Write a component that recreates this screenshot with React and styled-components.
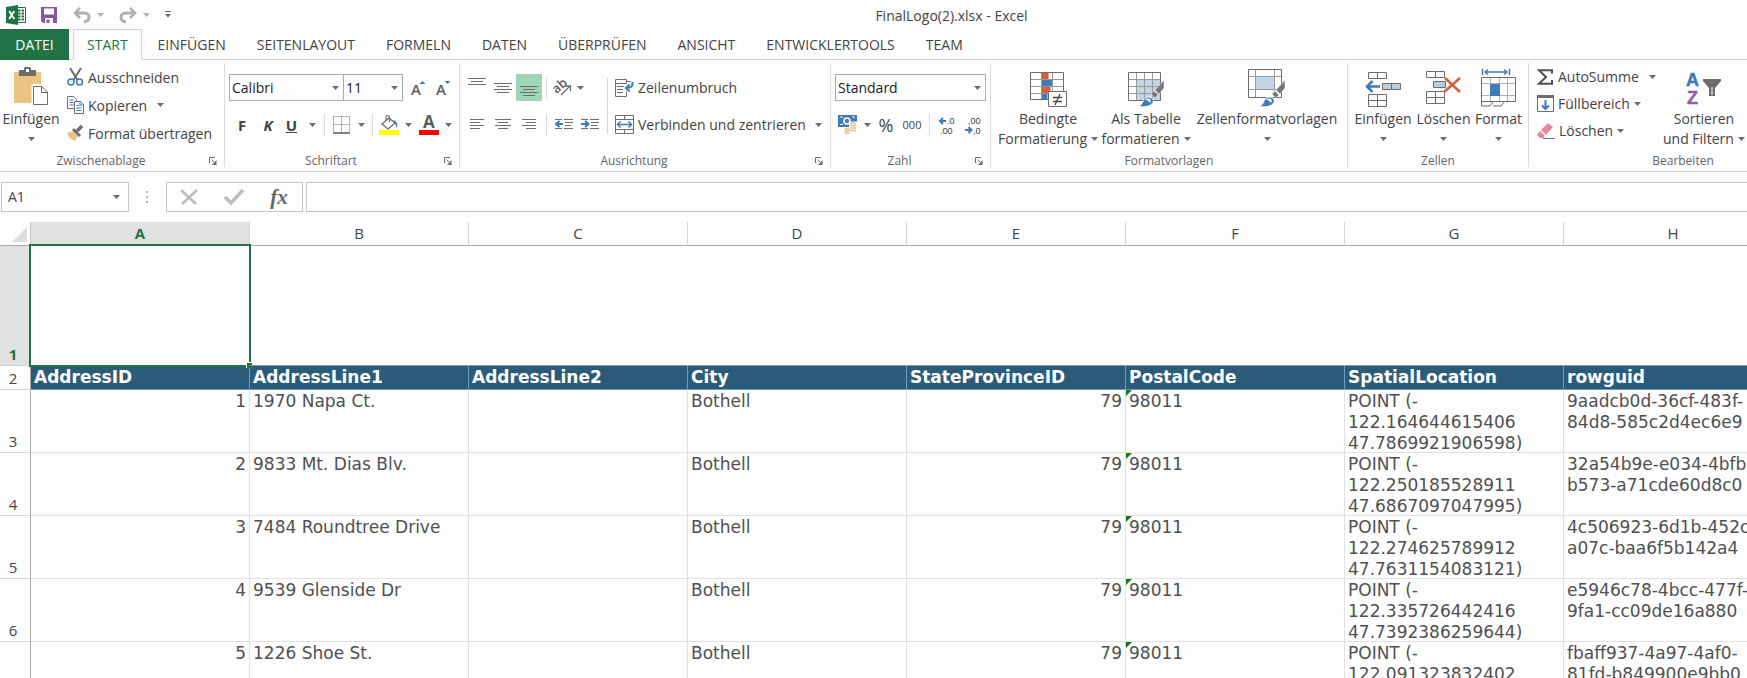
import React, { useState } from "react";
import styled, { createGlobalStyle, css } from "styled-components";

const GlobalStyle = createGlobalStyle`
	* {
		box-sizing: border-box;
	}
	body {
		margin: 0;
		overflow: hidden;
		background: #fdfdfd;
		color: #444;
		font-family: "Open Sans", "Noto Sans", sans-serif;
		font-size: 14px;
	}
	button, input, select {
		font: inherit;
		color: inherit;
	}
	svg {
		display: block;
		flex: none;
		overflow: visible;
	}
`

const Page = styled.div`
	min-height: 100vh;
	overflow: hidden;
`

const plainButton = css`
	border: 0;
	padding: 0;
	margin: 0;
	background: none;
	cursor: pointer;
	white-space: nowrap;
`

/* ---------- title bar and tabs ---------- */

const TitleBar = styled.header`
	display: grid;
	grid-template-columns: 1fr auto 1fr;
	align-items: center;
	height: 29px;
	padding: 0 6px 3px 0;
`

const QuickAccess = styled.div`
	display: flex;
	align-items: center;
	padding: 0 6px;
`

const QuickButton = styled.button`
	${plainButton}
	display: flex;
	align-items: center;
	gap: 6px;
	margin-right: ${p => p.$gap || 15}px;
`

const Title = styled.h1`
	margin: 0;
	padding: 3px 0 0 162px;
	font-size: 14px;
	font-weight: 400;
	line-height: 26px;
`

const Tabs = styled.nav`
	display: flex;
	gap: 1px;
	height: 31px;
	border-bottom: 1px solid #d2d2d2;
`

const FileTab = styled.button`
	${plainButton}
	width: 69px;
	height: 31px;
	margin-right: 3px;
	background: #217346;
	color: #fff;
`

const Tab = styled.button`
	${plainButton}
	height: 31px;
	padding: 0 14px;
	border: 1px solid transparent;
	${p => p.$active && css`
		padding: 0 13px;
		border-color: #d2d2d2;
		border-bottom-color: #fdfdfd;
		background: #fdfdfd;
		color: #217346;
	`}
`

/* ---------- ribbon ---------- */

const Ribbon = styled.div`
	display: flex;
	height: 112px;
	padding-top: 3px;
	border-bottom: 1px solid #d2d2d2;
`

const Group = styled.section`
	flex: 0 0 ${p => p.$w}px;
	display: flex;
	flex-direction: column;
	height: 104px;
	border-right: 1px solid #dcdcdc;
`

const GroupBody = styled.div`
	flex: 1;
	display: flex;
	align-items: flex-start;
	padding: 0 ${p => p.$pad || 0}px;
`

const GroupFooter = styled.div`
	display: flex;
	align-items: center;
	height: 12px;
	font-size: 12px;
	line-height: 12px;
	color: #666;
`

const GroupName = styled.span`
	flex: 1;
	text-align: center;
`

const Launcher = styled.button`
	${plainButton}
	display: flex;
	justify-content: center;
	width: 22px;
`

const Stack = styled.div`
	display: flex;
	flex-direction: column;
	gap: ${p => p.$gap || 0}px;
	padding-top: ${p => p.$top || 0}px;
	padding-left: ${p => p.$left || 0}px;
`

const Line = styled.div`
	display: flex;
	align-items: center;
	height: 27px;
`

const BigButton = styled.button`
	${plainButton}
	display: flex;
	flex-direction: column;
	align-items: center;
	width: ${p => p.$w}px;
	padding-top: 4px;
	line-height: 20px;
	flex: none;
`

const BigIcon = styled.span`
	display: flex;
	align-items: flex-end;
	justify-content: center;
	height: 40px;
	margin-bottom: 2px;
`

const BigText = styled.span`
	display: flex;
	align-items: center;
	justify-content: center;
	gap: 4px;
	min-height: 20px;
`

const SmallButton = styled.button`
	${plainButton}
	display: flex;
	align-items: center;
	height: ${p => p.$h || 28}px;
	gap: 4px;
`

const SmallText = styled.span`
	padding-right: ${p => p.$gap || 0}px;
`

const Tool = styled.button`
	${plainButton}
	display: flex;
	align-items: center;
	justify-content: center;
	width: ${p => p.$w || 26}px;
	height: 27px;
	gap: ${p => p.$gap || 7}px;
	background: ${p => p.$active ? "#9fd5b7" : "none"};
	font-size: ${p => p.$size || 14}px;
	flex: none;
`

const Separator = styled.span`
	width: 1px;
	height: ${p => p.$h || 22}px;
	margin: 0 ${p => p.$m || 0}px;
	background: #dcdcdc;
	flex: none;
`

const SelectBox = styled.label`
	display: grid;
	align-items: center;
	width: ${p => p.$w}px;
	height: 27px;
	border: 1px solid #ababab;
	margin-right: ${p => p.$join ? "-1px" : "0"};
	color: #222;
	flex: none;

	select, svg {
		grid-area: 1 / 1;
	}
	svg {
		justify-self: end;
		margin-right: 4px;
		pointer-events: none;
	}
	select {
		appearance: none;
		width: 100%;
		height: 25px;
		padding: 0 2px;
		border: 0;
		background: none;
	}
`

/* ---------- formula bar ---------- */

const FormulaBar = styled.div`
	display: flex;
	align-items: center;
	height: 50px;
	padding: 0 0 1px 1px;
`

const NameBox = styled.label`
	display: flex;
	align-items: center;
	width: 128px;
	height: 30px;
	padding-right: 8px;
	border: 1px solid #c6c6c6;

	input {
		flex: 1;
		min-width: 0;
		padding: 0 6px;
		border: 0;
		outline: 0;
		background: none;
	}
`

const Grip = styled.span`
	display: grid;
	gap: 3px;
	margin: 0 18px 0 17px;

	i {
		width: 2px;
		height: 2px;
		background: #b0b0b0;
	}
`

const FormulaButtons = styled.div`
	display: flex;
	align-items: center;
	justify-content: space-between;
	width: 137px;
	height: 30px;
	padding: 0 13px;
	margin-right: 3px;
	border: 1px solid #c6c6c6;
`

const FxButton = styled.button`
	${plainButton}
	width: 20px;
	font: italic bold 21px/26px "Liberation Serif", serif;
	color: #666;
`

const FormulaInput = styled.input`
	flex: 1;
	height: 30px;
	padding: 0 6px;
	border: 1px solid #c6c6c6;
	border-right: 0;
	outline: 0;
	background: none;
`

/* ---------- sheet ---------- */

const Sheet = styled.table`
	table-layout: fixed;
	width: 1783px;
	border-collapse: separate;
	border-spacing: 0;
	font-family: "DejaVu Sans", Verdana, sans-serif;
	font-size: 17px;
	line-height: 21px;
	color: #505050;

	td, th {
		padding: 0;
	}
`

const Corner = styled.td`
	border-bottom: 1px solid #ababab;
	border-right: 1px solid #c6c6c6;

	svg {
		margin: 3px 0 0 12px;
	}
`

const headFont = css`
	font-family: "Open Sans", "Noto Sans", sans-serif;
	font-size: 15px;
	font-weight: ${p => p.$active ? 700 : 400};
	color: ${p => p.$active ? "#217346" : "#444"};
	background: ${p => p.$active ? "#e1e1e1" : "none"};
`

const ColHead = styled.th`
	${headFont}
	height: 24px;
	border-right: 1px solid #d4d4d4;
	border-bottom: 1px solid #ababab;
`

const RowHead = styled.th`
	${headFont}
	height: ${p => p.$h}px;
	vertical-align: bottom;
	border-right: 1px solid #ababab;
	border-bottom: 1px solid #d4d4d4;

	span {
		display: block;
		padding-right: 4px;
	}
`

const Blank = styled.td`
	position: relative;
	border-bottom: 1px solid #8a9a94;
`

const Selection = styled.span`
	position: absolute;
	inset: -2px -1px -2px -2px;
	border: 2px solid #217346;

	&::after {
		content: "";
		position: absolute;
		right: -3px;
		bottom: -3px;
		width: 5px;
		height: 5px;
		border: 1px solid #fff;
		border-width: 1px 0 0 1px;
		background: #217346;
	}
`

const Field = styled.td`
	height: 24px;
	vertical-align: top;
	border-right: 1px solid #6a9cc4;
	border-bottom: 1px solid #6a9cc4;
	background: #2a5c79;
	color: #fff;
	font-weight: 700;

	div {
		padding: 1px 3px 0;
	}
`

const Cell = styled.td`
	position: relative;
	border-right: 1px solid #e1e1e1;
	border-bottom: 1px solid #e1e1e1;
	text-align: ${p => p.$right ? "right" : "left"};

	div {
		height: 62px;
		padding: 1px 3px 0;
		white-space: pre;
	}
`

const ErrorMark = styled.span`
	position: absolute;
	top: 0;
	left: 0;
	border-top: 6px solid #107c10;
	border-right: 6px solid transparent;
`

/* ---------- icons ---------- */

const G = "#6d6d6d"
const B = "#3f7bb6"

const Icon = ({ w, h, children, ...rest }) => (
	<svg width={w} height={h} viewBox={`0 0 ${w} ${h}`} fill="none" aria-hidden="true" {...rest}>{children}</svg>
)

const Arrow = ({ color = "#6d6d6d" }) => (
	<Icon w={7} h={4}><path d="M0 0h7L3.5 4z" fill={color} /></Icon>
)

const ExcelLogo = () => (
	<Icon w={20} h={20}>
		<path d="M10 2.5h9.5v15H10z" fill="#fff" stroke="#217346" />
		<path d="M12 5.5h2.5M12 8.5h2.5M12 11.5h2.5M12 14.5h2.5M15.5 5.5H18M15.5 8.5H18M15.5 11.5H18M15.5 14.5H18" stroke="#217346" strokeWidth="2" />
		<path d="M0 2l12-2v20L0 18z" fill="#217346" />
		<path d="M3.2 6l5 8M8.2 6l-5 8" stroke="#fff" strokeWidth="1.8" />
	</Icon>
)

const SaveIcon = () => (
	<Icon w={16} h={16}>
		<path d="M0 0h16v16H2l-2-2z" fill="#8557a5" />
		<path d="M3 1.500h10v6H3zM4 11h8v5H4z" fill="#fff" />
		<path d="M5.500 12.500h3V16h-3z" fill="#8557a5" />
	</Icon>
)

const UndoIcon = ({ flip }) => (
	<Icon w={18} h={16}>
		<g transform={flip ? "translate(18 0) scale(-1 1)" : undefined} stroke="#b0b0b0">
			<path d="M2 6h9c7 0 6.500 8 0 9" strokeWidth="3" />
			<path d="M7 .8L2 6l5 5" strokeWidth="2.600" />
		</g>
	</Icon>
)

const MoreIcon = () => (
	<Icon w={6} h={7}><path d="M0 .5h6" stroke={G} /><path d="M0 3h6L3 6.500z" fill={G} /></Icon>
)

const PasteIcon = () => (
	<Icon w={36} h={40}>
		<path d="M1 5h27v31H1z" fill="#eac481" />
		<path d="M6 3h5V1.500C11 .5 12 0 13 0h3c1 0 2 .5 2 1.500V3h5v6H6z" fill="#6d6d6d" />
		<path d="M13 2h3v3h-3z" fill="#fff" />
		<path d="M20 18.500h9l6 6V38H20z" fill="#fff" stroke="#fff" strokeWidth="3" />
		<path d="M20.500 19.500h8.500l5.500 5.500v12.500h-14zM28.500 19.500v6h6" fill="#fff" stroke={G} />
	</Icon>
)

const CutIcon = () => (
	<Icon w={17} h={18}>
		<path d="M3 0l7.500 12M14 0L6.500 12" stroke={G} strokeWidth="2" />
		<circle cx="4" cy="14" r="3" stroke={B} strokeWidth="1.500" />
		<circle cx="12.500" cy="14" r="3" stroke={B} strokeWidth="1.500" />
	</Icon>
)

const CopyIcon = () => (
	<Icon w={17} h={18}>
		<path d="M.5.5h6l3 3v9h-9z" fill="#fff" stroke={G} />
		<path d="M2.500 4h4M2.500 6.500h4M2.500 9h4" stroke={B} />
		<path d="M7.500 5.500h6l3 3v9h-9z" fill="#fff" stroke={G} />
		<path d="M9.500 9.500h3M9.500 12h5M9.500 14.500h5M13 5.500v3.500h3.500" stroke={B} />
	</Icon>
)

const BrushIcon = () => (
	<Icon w={17} h={16}>
		<path d="M0 8l6-2 5 5-3 5c-3-1-6-3-8-8z" fill="#eac481" />
		<path d="M5 5l2-2 7 7-2 2z" fill={G} />
		<path d="M10 6l5-5" stroke={G} strokeWidth="3.500" />
	</Icon>
)

const LaunchIcon = () => (
	<Icon w={8} h={8}>
		<path d="M.5 6V.5H6M2.500 2.500l3 3" stroke={G} />
		<path d="M7.500 3v5H3z" fill={G} />
	</Icon>
)

const GrowIcon = ({ down }) => (
	<Icon w={15} h={16}>
		<text x="0" y="15" fontSize="15" fontWeight="600" fill="#5d5d5d" fontFamily="Open Sans">A</text>
		<path d={down ? "M8.500 1h6l-3 3z" : "M8.500 4h6l-3-3z"} fill={B} />
	</Icon>
)

const BorderIcon = () => (
	<Icon w={17} h={18}>
		<path d="M.5.5h16M.5 8.500h16M.5.5v16M8.500.5v16M16.500.5v16" stroke={G} strokeDasharray="1 1" />
		<path d="M0 17h17" stroke="#555" strokeWidth="1.500" />
	</Icon>
)

const FillIcon = () => (
	<Icon w={20} h={20}>
		<path d="M3 9l7-6 6 5-7 6z" fill="#fff" stroke={G} strokeWidth="1.300" />
		<path d="M7 6V2c0-2 3.500-2 3.500 0v5" stroke={G} strokeWidth="1.200" />
		<path d="M14 5c4 1 5 4 4 8-1-2-1-3-2.500-5z" fill={B} />
		<path d="M0 15h20v5H0z" fill="#ffff00" />
	</Icon>
)

const FontColorIcon = () => (
	<Icon w={20} h={20}>
		<text x="4" y="13" fontSize="17" fontWeight="700" fill="#5d5d5d" fontFamily="Open Sans">A</text>
		<path d="M0 15h20v5H0z" fill="#ff0000" />
	</Icon>
)

// every line is [x, width]
const LinesIcon = ({ lines, y = 0, h = 19 }) => (
	<Icon w={18} h={h} shapeRendering="crispEdges">
		{lines.map(([x, w], i) => <path key={i} d={`M${x} ${y + i * 3 + 0.5}h${w}`} stroke={G} />)}
	</Icon>
)

const OrientIcon = () => (
	<Icon w={19} h={17}>
		<text x="0" y="12" fontSize="13" fontWeight="600" fill="#5d5d5d" fontFamily="Open Sans" transform="rotate(-42 6 9)">ab</text>
		<path d="M8 16L17 7M12.500 7H17.500v5" stroke={G} strokeWidth="1.300" />
	</Icon>
)

const IndentIcon = ({ right }) => (
	<Icon w={18} h={12}>
		<path d="M0 .5h7M9 .5h9M10 3.500h8M10 6.500h6M9 9.500h9M0 9.500h7" stroke={G} />
		<path d={right ? "M0 5h6M4 2l3.500 3L4 8" : "M8 5H2M4.500 2L1 5l3.500 3"} stroke={B} strokeWidth="2" />
	</Icon>
)

const WrapIcon = () => (
	<Icon w={19} h={18}>
		<path d="M.5.5h11v4H.5zM.5 4.500v13h11v-5M2 7.500h7M2 10.500h6M2 13.500h6" stroke={G} />
		<path d="M12 2.500h4" stroke={G} />
		<path d="M17.500 3c.5 4-1 6-6 6M14.500 5.500L11 9l3.500 3.500" stroke={B} strokeWidth="2" />
	</Icon>
)

const MergeIcon = () => (
	<Icon w={19} h={19}>
		<path d="M.5.5h18v18H.5zM.5 4.500h18M.5 14.500h18M9.500.5v4M9.500 14.500v4" stroke={G} />
		<path d="M3 9.500h13M5.500 6.500l-3 3 3 3M13.500 6.500l3 3-3 3" stroke={B} strokeWidth="1.500" />
	</Icon>
)

const MoneyIcon = () => (
	<Icon w={19} h={19}>
		<path d="M0 0h19v12H0z" fill={B} />
		<path d="M2 2h3M14 2h3M2 9.500h3" stroke="#fff" />
		<circle cx="9" cy="6" r="3" stroke="#fff" strokeWidth="1.600" />
		<path d="M11 6.500h8V19H6v-6h5z" fill="#fdfdfd" />
		<path d="M12 8h6M12 10.500h6M12 13h6M12 15.500h6M6.500 14h5M6.500 16h5M6.500 18h5" stroke="#e3bd7c" strokeWidth="1.500" />
	</Icon>
)

const DecimalIcon = ({ less }) => (
	<Icon w={17} h={18}>
		<g fontSize="9" fill="#444" fontFamily="Liberation Sans">
			<text x={less ? 3 : 8} y="8">{less ? ",00" : ".0"}</text>
			<text x={less ? 8 : 1} y="18">{less ? ",0" : ".00"}</text>
		</g>
		<path d={less ? "M0 14h6M3.500 11l3 3-3 3" : "M7 5H1.500M4 2L1 5l3 3"} stroke={B} strokeWidth="2" />
	</Icon>
)

const CondIcon = () => (
	<Icon w={37} h={35}>
		<path d="M11.500 1h7v6h-7zM11.500 15h9v6h-9z" fill="#d2603f" />
		<path d="M11.500 8h11v6h-11zM11.500 22h6v6h-6z" fill={B} />
		<path d="M.5 7.500h33M.5 14.500h33M.5 21.500h33M11.500.5v27M22.500.5v27" stroke="#9a9a9a" />
		<path d="M.5.5h33v27H.5z" stroke={G} />
		<path d="M18.500 19.500h18v15h-18z" fill="#fff" stroke={G} />
		<path d="M23 25.500h9M23 29.500h9M30 22l-5 11" stroke="#444" strokeWidth="1.300" />
	</Icon>
)

const PaintBrush = () => (
	<>
		<path d="M36 9v8l-5 6-4-4z" fill="#777" stroke="#fff" strokeWidth=".5" />
		<path d="M26 20l4 4-3 3-4-4z" fill="#777" stroke="#fff" strokeWidth=".5" />
		<path d="M10 35.500c4-1 4-4 6-7 3-5 11-2 9 3-2 4-9 5-15 4z" fill={B} stroke="#fff" />
		<path d="M17.500 29c2-3 7-1 4.500 3-1-2-2.500-3-4.500-3z" fill="#fff" />
	</>
)

const TableStyleIcon = () => (
	<Icon w={37} h={36}>
		<path d="M8.500 8h24v21h-24z" fill="#c3d3e8" />
		<path d="M.5 8.500h32M.5 15.500h32M.5 22.500h32M8.500 1v28M16.500 1v28M24.500 1v28" stroke="#9a9a9a" />
		<path d="M.5 1.500h32v28H.5z" stroke={G} />
		<PaintBrush />
	</Icon>
)

const CellStyleIcon = () => (
	<Icon w={38} h={38}>
		<path d="M8 8h18v12H8z" fill="#c3d3e8" />
		<path d="M.5 7.500h33M.5 20.500h33M7.500.5v28M26.500.5v28" stroke="#9a9a9a" />
		<path d="M.5.5h33v28H.5z" stroke={G} />
		<g transform="translate(1 2)"><PaintBrush /></g>
	</Icon>
)

const InsertIcon = () => (
	<Icon w={37} h={35}>
		<path d="M3.500.5h18v6h-18zM12.500.5v6M3.500 22.500h18v12h-18zM3.500 28.500h18M12.500 22.500v12" stroke={G} />
		<path d="M17.500 11.500h18v6h-18zM26.500 11.500v6" fill="#b8cce0" stroke={G} />
		<path d="M15 14.500H2M7.500 9L2 14.500 7.500 20" stroke={B} strokeWidth="2.500" />
	</Icon>
)

const DeleteIcon = () => (
	<Icon w={36} h={36}>
		<path d="M.5.5h18v6h-18zM9.500.5v6M.5 20.500h18v12h-18zM.5 26.500h18M9.500 20.500v12" stroke={G} />
		<path d="M7.500 10.500h12v6h-12z" fill="#b8cce0" stroke={G} />
		<path d="M19 7l15 14M34 7L18 21" stroke="#d2603f" strokeWidth="2.600" />
	</Icon>
)

const FormatIcon = () => (
	<Icon w={36} h={38}>
		<path d="M1.500 0v6M28.500 0v6M4 3h22M7 .5L4 3l3 2.500M23 .5L26 3l-3 2.500" stroke={B} strokeWidth="1.500" />
		<path d="M.5 14.500h34M.5 26.500h34M9.500 8.500v25M18.500 8.500v25M26.500 8.500v25" stroke="#b0b0b0" />
		<path d="M.5 8.500h34v24H.5z" stroke={G} />
		<path d="M9 15h10v12H9z" fill={B} />
		<path d="M.5 32.500V37H9l3-4M12 37h8l3-4" stroke={G} />
	</Icon>
)

const SumIcon = () => (
	<Icon w={17} h={16}>
		<path d="M15 4.500V1.200H2L9 8l-7 6.800h13V11" stroke="#505050" strokeWidth="2" />
	</Icon>
)

const FillDownIcon = () => (
	<Icon w={17} h={17}>
		<path d="M.5.5h16v16H.5z" stroke={G} />
		<path d="M0 0h17v3H0z" fill={G} />
		<path d="M8.500 5v9M5 10.500L8.500 14l3.500-3.500" stroke={B} strokeWidth="2" />
	</Icon>
)

const EraserIcon = () => (
	<Icon w={18} h={16}>
		<path d="M4 7l7-7 5 4-7 8z" fill="#e38a9d" />
		<path d="M3 8l5 5-2 2H3L0 12z" fill="#e38a9d" />
		<path d="M6 15.500h12" stroke={G} />
	</Icon>
)

const SortIcon = () => (
	<Icon w={36} h={36}>
		<g fontSize="18" fontWeight="600" fontFamily="Liberation Sans" strokeWidth=".5">
			<text x="0" y="15" fill={B} stroke={B}>A</text>
			<text x="1" y="33" fill="#8e5fae" stroke="#8e5fae">Z</text>
		</g>
		<path d="M17 8h18v2l-6 7v8h-6v-8l-6-7z" fill={G} />
		<path d="M26 16v8" stroke="#fff" />
	</Icon>
)

/* ---------- data ---------- */

const tabs = ["START", "EINFÜGEN", "SEITENLAYOUT", "FORMELN", "DATEN", "ÜBERPRÜFEN", "ANSICHT", "ENTWICKLERTOOLS", "TEAM"]

const letters = ["A", "B", "C", "D", "E", "F", "G", "H"]

const fields = ["AddressID", "AddressLine1", "AddressLine2", "City", "StateProvinceID", "PostalCode", "SpatialLocation", "rowguid"]

const rows = [
	["1", "1970 Napa Ct.", "", "Bothell", "79", "98011", "POINT (-\n122.164644615406\n47.7869921906598)", "9aadcb0d-36cf-483f-\n84d8-585c2d4ec6e9"],
	["2", "9833 Mt. Dias Blv.", "", "Bothell", "79", "98011", "POINT (-\n122.250185528911\n47.6867097047995)", "32a54b9e-e034-4bfb-\nb573-a71cde60d8c0"],
	["3", "7484 Roundtree Drive", "", "Bothell", "79", "98011", "POINT (-\n122.274625789912\n47.7631154083121)", "4c506923-6d1b-452c-\na07c-baa6f5b142a4"],
	["4", "9539 Glenside Dr", "", "Bothell", "79", "98011", "POINT (-\n122.335726442416\n47.7392386259644)", "e5946c78-4bcc-477f-\n9fa1-cc09de16a880"],
	["5", "1226 Shoe St.", "", "Bothell", "79", "98011", "POINT (-\n122.091323832402", "fbaff937-4a97-4af0-\n81fd-b849900e9bb0"],
]

const RibbonGroup = ({ name, w, pad, launch, children }) => (
	<Group $w={w} aria-label={name}>
		<GroupBody $pad={pad}>{children}</GroupBody>
		<GroupFooter>
			<GroupName>{name}</GroupName>
			{launch && <Launcher aria-label={name + " Optionen"}><LaunchIcon /></Launcher>}
		</GroupFooter>
	</Group>
)

const Big = ({ w, icon, text, text2 }) => (
	<BigButton $w={w}>
		<BigIcon>{icon}</BigIcon>
		<BigText>{text}</BigText>
		<BigText>{text2}<Arrow /></BigText>
	</BigButton>
)

const Small = ({ icon, text, gap, arrow, h }) => (
	<SmallButton $h={h}>
		{icon}
		<SmallText $gap={gap}>{text}</SmallText>
		{arrow && <Arrow />}
	</SmallButton>
)

const Combo = ({ w, value, label, join }) => (
	<SelectBox $w={w} $join={join}>
		<select aria-label={label} defaultValue={value}>
			<option>{value}</option>
		</select>
		<Arrow />
	</SelectBox>
)

const App = () => {
	const [tab, set_tab] = useState("START")
	const [formula, set_formula] = useState("")

	return <Page>
		<GlobalStyle />
		<TitleBar>
			<QuickAccess>
				<QuickButton aria-label="Excel"><ExcelLogo /></QuickButton>
				<QuickButton aria-label="Speichern" $gap={16}><SaveIcon /></QuickButton>
				<QuickButton aria-label="Rückgängig"><UndoIcon /><Arrow color="#b0b0b0" /></QuickButton>
				<QuickButton aria-label="Wiederholen"><UndoIcon flip /><Arrow color="#b0b0b0" /></QuickButton>
				<QuickButton aria-label="Anpassen"><MoreIcon /></QuickButton>
			</QuickAccess>
			<Title>FinalLogo(2).xlsx - Excel</Title>
		</TitleBar>

		<Tabs>
			<FileTab>DATEI</FileTab>
			{tabs.map(t => <Tab key={t} $active={t === tab} onClick={() => set_tab(t)}>{t}</Tab>)}
		</Tabs>

		<Ribbon>
			<RibbonGroup name="Zwischenablage" w={225} launch>
				<Big w={62} icon={<PasteIcon />} text="Einfügen" />
				<Stack $left={5}>
					<Small icon={<CutIcon />} text="Ausschneiden" />
					<Small icon={<CopyIcon />} text="Kopieren" gap={6} arrow />
					<Small icon={<BrushIcon />} text="Format übertragen" />
				</Stack>
			</RibbonGroup>

			<RibbonGroup name="Schriftart" w={235} pad={4} launch>
				<Stack $top={11} $gap={10}>
					<Line>
						<Combo w={115} value="Calibri" label="Schriftart" join />
						<Combo w={60} value="11" label="Schriftgrad" />
						<Tool $w={30} aria-label="Vergrößern"><GrowIcon /></Tool>
						<Tool $w={20} aria-label="Verkleinern"><GrowIcon down /></Tool>
					</Line>
					<Line>
						<Tool $size={15}><b>F</b></Tool>
						<Tool $size={15}><b><i>K</i></b></Tool>
						<Tool $w={40} $gap={12} $size={15}><b><u>U</u></b><Arrow /></Tool>
						<Separator $m={3} />
						<Tool $w={42} $gap={8} aria-label="Rahmen"><BorderIcon /><Arrow /></Tool>
						<Separator $m={2} />
						<Tool $w={41} $gap={6} aria-label="Füllfarbe"><FillIcon /><Arrow /></Tool>
						<Tool $w={38} $gap={6} aria-label="Schriftfarbe"><FontColorIcon /><Arrow /></Tool>
					</Line>
				</Stack>
			</RibbonGroup>

			<RibbonGroup name="Ausrichtung" w={371} pad={4} launch>
				<Stack $top={11} $gap={10}>
					<Line>
						<Tool aria-label="Oben"><LinesIcon lines={[[0, 18], [3, 12], [0, 18]]} /></Tool>
						<Tool aria-label="Mitte"><LinesIcon y={5} lines={[[0, 18], [3, 12], [0, 18], [3, 12]]} /></Tool>
						<Tool $active aria-label="Unten"><LinesIcon y={8} lines={[[0, 18], [3, 12], [0, 18], [3, 12]]} /></Tool>
						<Separator $m={4} />
						<Tool $w={35} $gap={5} aria-label="Ausrichtung"><OrientIcon /><Arrow /></Tool>
					</Line>
					<Line>
						<Tool aria-label="Linksbündig"><LinesIcon h={12} lines={[[2, 14], [2, 10], [2, 14], [2, 10]]} /></Tool>
						<Tool aria-label="Zentriert"><LinesIcon h={12} lines={[[1, 16], [4, 10], [1, 16], [4, 10]]} /></Tool>
						<Tool aria-label="Rechtsbündig"><LinesIcon h={12} lines={[[2, 14], [6, 10], [2, 14], [6, 10]]} /></Tool>
						<Separator $m={4} />
						<Tool aria-label="Einzug verkleinern"><IndentIcon /></Tool>
						<Tool aria-label="Einzug vergrößern"><IndentIcon right /></Tool>
					</Line>
				</Stack>
				<Stack $top={15} $left={4}><Separator $h={56} /></Stack>
				<Stack $top={11} $left={7} $gap={10}>
					<Small h={27} icon={<WrapIcon />} text="Zeilenumbruch" />
					<Small h={27} icon={<MergeIcon />} text="Verbinden und zentrieren" gap={5} arrow />
				</Stack>
			</RibbonGroup>

			<RibbonGroup name="Zahl" w={159} pad={4} launch>
				<Stack $top={11} $gap={10}>
					<Line><Combo w={151} value="Standard" label="Zahlenformat" /></Line>
					<Line>
						<Tool $w={38} $gap={7} aria-label="Währung"><MoneyIcon /><Arrow /></Tool>
						<Tool $w={26} $size={18}>%</Tool>
						<Tool $w={26} $size={11}>000</Tool>
						<Separator $m={4} />
						<Tool aria-label="Dezimalstelle hinzufügen"><DecimalIcon /></Tool>
						<Tool aria-label="Dezimalstelle entfernen"><DecimalIcon less /></Tool>
					</Line>
				</Stack>
			</RibbonGroup>

			<RibbonGroup name="Formatvorlagen" w={357} pad={5}>
				<Big w={104} icon={<CondIcon />} text="Bedingte" text2="Formatierung" />
				<Big w={92} icon={<TableStyleIcon />} text="Als Tabelle" text2="formatieren" />
				<Big w={150} icon={<CellStyleIcon />} text="Zellenformatvorlagen" />
			</RibbonGroup>

			<RibbonGroup name="Zellen" w={181} pad={4}>
				<Big w={62} icon={<InsertIcon />} text="Einfügen" />
				<Big w={59} icon={<DeleteIcon />} text="Löschen" />
				<Big w={51} icon={<FormatIcon />} text="Format" />
			</RibbonGroup>

			<RibbonGroup name="Bearbeiten" w={309} pad={8}>
				<Stack>
					<Small h={27} icon={<SumIcon />} text="AutoSumme" gap={6} arrow />
					<Small h={27} icon={<FillDownIcon />} text="Füllbereich" arrow />
					<Small h={27} icon={<EraserIcon />} text="Löschen" arrow />
				</Stack>
				<Stack $left={5}>
					<Big w={86} icon={<SortIcon />} text="Sortieren" text2="und Filtern" />
				</Stack>
			</RibbonGroup>
		</Ribbon>

		<FormulaBar>
			<NameBox>
				<input aria-label="Namenfeld" defaultValue="A1" />
				<Arrow />
			</NameBox>
			<Grip><i /><i /><i /></Grip>
			<FormulaButtons>
				<QuickButton aria-label="Abbrechen" $gap={1}>
					<Icon w={18} h={16}><path d="M1 1l15 14M17 1L2 15" stroke="#bdbdbd" strokeWidth="2.600" /></Icon>
				</QuickButton>
				<QuickButton aria-label="Eingeben" $gap={1}>
					<Icon w={20} h={16}><path d="M1 8l6 6L19 1" stroke="#bdbdbd" strokeWidth="3.500" /></Icon>
				</QuickButton>
				<FxButton>fx</FxButton>
			</FormulaButtons>
			<FormulaInput aria-label="Formel" value={formula} onChange={e => set_formula(e.target.value)} />
		</FormulaBar>

		<Sheet>
			<colgroup>
				<col width="31" />
				{letters.map(l => <col key={l} width="219" />)}
			</colgroup>
			<thead>
				<tr>
					<Corner><Icon w={16} h={16}><path d="M15 0v15H0z" fill="#dedede" /></Icon></Corner>
					{letters.map(l => <ColHead key={l} scope="col" $active={l === "A"}>{l}</ColHead>)}
				</tr>
			</thead>
			<tbody>
				<tr>
					<RowHead scope="row" $h={120} $active><span>1</span></RowHead>
					{letters.map(l => <Blank key={l}>{l === "A" && <Selection />}</Blank>)}
				</tr>
				<tr>
					<RowHead scope="row" $h={24}><span>2</span></RowHead>
					{fields.map(f => <Field key={f}><div>{f}</div></Field>)}
				</tr>
				{rows.map((row, r) => (
					<tr key={r}>
						<RowHead scope="row" $h={63}><span>{r + 3}</span></RowHead>
						{row.map((value, c) => (
							<Cell key={c} $right={c === 0 || c === 4}>
								{c === 5 && <ErrorMark />}
								<div>{value}</div>
							</Cell>
						))}
					</tr>
				))}
			</tbody>
		</Sheet>
	</Page>
}

export default App;
